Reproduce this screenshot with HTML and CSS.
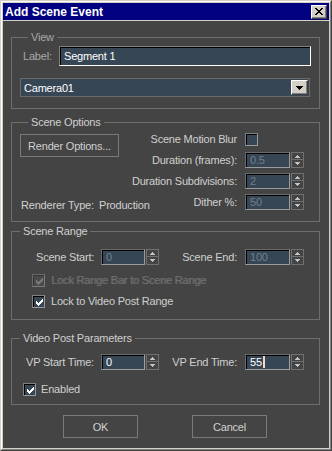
FILE: index.html
```html
<!DOCTYPE html>
<html>
<head>
<meta charset="utf-8">
<title>Add Scene Event</title>
<link rel="stylesheet" href="styles.css">
</head>
<body>
<div class="window">
  <div class="frame">
    <div class="titlebar">
      <span class="title">Add Scene Event</span>
      <span class="close-btn"><svg width="8" height="7" viewBox="0 0 8 7"><path d="M0 0h2v1h-2z M6 0h2v1h-2z M1 1h2v1h-2z M5 1h2v1h-2z M2 2h4v1h-4z M3 3h2v1h-2z M2 4h4v1h-4z M1 5h2v1h-2z M5 5h2v1h-2z M0 6h2v1h-2z M6 6h2v1h-2z" fill="#000"/></svg></span>
    </div>
    <div class="client">
      <section class="group group-view">
        <div class="legend legend-dim">View</div>
        <div class="label-row">
          <span class="label-caption">Label:</span>
          <div class="edit edit-wide">Segment 1</div>
        </div>
        <div class="combo">
          <span class="combo-text">Camera01</span>
          <span class="combo-btn"><svg width="7" height="4" viewBox="0 0 7 4"><path d="M0 0h7v1h-7z M1 1h5v1h-5z M2 2h3v1h-3z M3 3h1v1h-1z" fill="#000"/></svg></span>
        </div>
      </section>

      <section class="group group-options">
        <div class="legend">Scene Options</div>
        <div class="options-grid">
          <div class="btn btn-render">Render Options...</div>
          <span class="opt-label r1">Scene Motion Blur</span>
          <span class="opt-ctl r1"><span class="checkbox"></span></span>
          <span class="opt-label r2">Duration (frames):</span>
          <span class="opt-ctl r2"><span class="edit edit-num disabled">0.5</span><span class="spinner"><svg width="13" height="16" viewBox="0 0 13 16"><rect x="0.5" y="0.5" width="12" height="15" fill="none" stroke="#707070"/><path d="M1 7.5h11" stroke="#707070"/><path d="M6 3h1v1h-1z M5 4h3v1h-3z M4 5h5v1h-5z M4 10h5v1h-5z M5 11h3v1h-3z M6 12h1v1h-1z" fill="#c4c4c4"/></svg></span></span>
          <span class="opt-label r3">Duration Subdivisions:</span>
          <span class="opt-ctl r3"><span class="edit edit-num disabled">2</span><span class="spinner"><svg width="13" height="16" viewBox="0 0 13 16"><rect x="0.5" y="0.5" width="12" height="15" fill="none" stroke="#707070"/><path d="M1 7.5h11" stroke="#707070"/><path d="M6 3h1v1h-1z M5 4h3v1h-3z M4 5h5v1h-5z M4 10h5v1h-5z M5 11h3v1h-3z M6 12h1v1h-1z" fill="#c4c4c4"/></svg></span></span>
          <div class="renderer-type"><span class="renderer-caption">Renderer Type:</span><span>Production</span></div>
          <span class="opt-label r4">Dither %:</span>
          <span class="opt-ctl r4"><span class="edit edit-num disabled">50</span><span class="spinner"><svg width="13" height="16" viewBox="0 0 13 16"><rect x="0.5" y="0.5" width="12" height="15" fill="none" stroke="#707070"/><path d="M1 7.5h11" stroke="#707070"/><path d="M6 3h1v1h-1z M5 4h3v1h-3z M4 5h5v1h-5z M4 10h5v1h-5z M5 11h3v1h-3z M6 12h1v1h-1z" fill="#c4c4c4"/></svg></span></span>
        </div>
      </section>

      <section class="group group-range">
        <div class="legend">Scene Range</div>
        <div class="spin-row range-row">
          <span class="start-caption caption-range">Scene Start:</span>
          <span class="edit edit-short disabled">0</span>
          <span class="spinner"><svg width="13" height="16" viewBox="0 0 13 16"><rect x="0.5" y="0.5" width="12" height="15" fill="none" stroke="#707070"/><path d="M1 7.5h11" stroke="#707070"/><path d="M6 3h1v1h-1z M5 4h3v1h-3z M4 5h5v1h-5z M4 10h5v1h-5z M5 11h3v1h-3z M6 12h1v1h-1z" fill="#c4c4c4"/></svg></span>
          <span class="end-caption">Scene End:</span>
          <span class="edit edit-num disabled">100</span>
          <span class="spinner"><svg width="13" height="16" viewBox="0 0 13 16"><rect x="0.5" y="0.5" width="12" height="15" fill="none" stroke="#707070"/><path d="M1 7.5h11" stroke="#707070"/><path d="M6 3h1v1h-1z M5 4h3v1h-3z M4 5h5v1h-5z M4 10h5v1h-5z M5 11h3v1h-3z M6 12h1v1h-1z" fill="#c4c4c4"/></svg></span>
        </div>
        <div class="check-row check-lock-bar">
          <span class="checkbox checkbox-disabled"><svg width="7" height="7" viewBox="0 0 7 7"><path d="M6 0h1v1h-1z M5 1h2v1h-2z M0 2h1v1h-1z M4 2h3v1h-3z M0 3h2v1h-2z M3 3h3v1h-3z M0 4h5v1h-5z M1 5h3v1h-3z M2 6h1v1h-1z" fill="#7a7a7a"/></svg></span>
          <span class="check-text text-disabled">Lock Range Bar to Scene Range</span>
        </div>
        <div class="check-row check-lock-vp">
          <span class="checkbox"><svg width="7" height="7" viewBox="0 0 7 7"><path d="M6 0h1v1h-1z M5 1h2v1h-2z M0 2h1v1h-1z M4 2h3v1h-3z M0 3h2v1h-2z M3 3h3v1h-3z M0 4h5v1h-5z M1 5h3v1h-3z M2 6h1v1h-1z" fill="#fff"/></svg></span>
          <span class="check-text">Lock to Video Post Range</span>
        </div>
      </section>

      <section class="group group-vp">
        <div class="legend">Video Post Parameters</div>
        <div class="spin-row vp-row">
          <span class="start-caption caption-vp">VP Start Time:</span>
          <span class="edit edit-short edit-active">0</span>
          <span class="spinner"><svg width="13" height="16" viewBox="0 0 13 16"><rect x="0.5" y="0.5" width="12" height="15" fill="none" stroke="#707070"/><path d="M1 7.5h11" stroke="#707070"/><path d="M6 3h1v1h-1z M5 4h3v1h-3z M4 5h5v1h-5z M4 10h5v1h-5z M5 11h3v1h-3z M6 12h1v1h-1z" fill="#c4c4c4"/></svg></span>
          <span class="end-caption">VP End Time:</span>
          <span class="edit edit-num edit-active">55<span class="caret"></span></span>
          <span class="spinner"><svg width="13" height="16" viewBox="0 0 13 16"><rect x="0.5" y="0.5" width="12" height="15" fill="none" stroke="#707070"/><path d="M1 7.5h11" stroke="#707070"/><path d="M6 3h1v1h-1z M5 4h3v1h-3z M4 5h5v1h-5z M4 10h5v1h-5z M5 11h3v1h-3z M6 12h1v1h-1z" fill="#c4c4c4"/></svg></span>
        </div>
        <div class="check-row check-enabled">
          <span class="checkbox"><svg width="7" height="7" viewBox="0 0 7 7"><path d="M6 0h1v1h-1z M5 1h2v1h-2z M0 2h1v1h-1z M4 2h3v1h-3z M0 3h2v1h-2z M3 3h3v1h-3z M0 4h5v1h-5z M1 5h3v1h-3z M2 6h1v1h-1z" fill="#fff"/></svg></span>
          <span class="check-text check-text-enabled">Enabled</span>
        </div>
      </section>

      <div class="button-row">
        <div class="btn btn-dialog">OK</div>
        <div class="btn btn-dialog">Cancel</div>
      </div>
    </div>
  </div>
</div>
</body>
</html>
```

FILE: styles.css
```css
html, body {
  margin: 0;
  padding: 0;
  background: #444444;
}

body {
  font-family: "Liberation Sans", Arial, sans-serif;
  font-size: 11px;
  letter-spacing: -0.2px;
  color: #d0d0d0;
}

.window {
  width: 332px;
  height: 451px;
  box-sizing: border-box;
  border: 1px solid;
  border-color: #d4d0c8 #404040 #404040 #d4d0c8;
}

.frame {
  height: 100%;
  box-sizing: border-box;
  border: 1px solid;
  border-color: #ffffff #808080 #808080 #ffffff;
  background: #d4d0c8;
  padding: 1px 1px 1px 1px;
  display: flex;
  flex-direction: column;
}

.titlebar {
  height: 17px;
  flex: none;
  background: #000080;
  display: flex;
  align-items: flex-start;
  padding-left: 2px;
}

.title {
  color: #ffffff;
  font-weight: bold;
  font-size: 12px;
  letter-spacing: 0;
  line-height: 17px;
  margin-top: 1px;
}

.close-btn {
  margin-left: auto;
  margin-right: 2px;
  margin-top: 2px;
  width: 16px;
  height: 14px;
  box-sizing: border-box;
  background: #d4d0c8;
  border: 1px solid;
  border-color: #ffffff #404040 #404040 #ffffff;
  box-shadow: inset -1px -1px #808080;
  display: flex;
  align-items: center;
  justify-content: center;
  padding-bottom: 1px;
}

.close-btn svg {
  display: block;
}

.client {
  flex: 1;
  margin-top: 1px;
  background: #444444;
  padding: 16px 9px 0 8px;
}

.group {
  border: 1px solid #6e6e6e;
}

.legend {
  width: fit-content;
  margin: -7px 0 0 8px;
  padding: 0 3px;
  background: #444444;
  line-height: 13px;
  height: 13px;
  color: #d0d0d0;
}

.legend-dim {
  color: #a8a8a8;
}

/* View group */
.group-view {
  padding: 0 8px 11px 8px;
}

.label-row {
  display: flex;
  margin-top: 2px;
}

.label-caption {
  width: 36px;
  margin-left: 3px;
  line-height: 20px;
  color: #a8a8a8;
}

.edit {
  box-sizing: border-box;
  background: #364655;
  border: 1px solid;
  border-color: #6a6a6a #9a9a9a #9a9a9a #6a6a6a;
  box-shadow: inset 1px 1px #000000;
  padding-left: 4px;
  color: #ffffff;
  white-space: nowrap;
  overflow: hidden;
}

.edit-wide {
  flex: 1;
  height: 20px;
  line-height: 18px;
  border-color: #808080 #ffffff #ffffff #808080;
}

.combo {
  margin-top: 12px;
  margin-right: 1px;
  height: 19px;
  box-sizing: border-box;
  background: #364655;
  border: 1px solid #6a6a6a;
  display: flex;
  align-items: center;
}

.combo-text {
  flex: 1;
  padding-left: 3px;
  color: #ffffff;
}

.combo-btn {
  width: 17px;
  height: 15px;
  box-sizing: border-box;
  margin-right: 1px;
  background: #d4d0c8;
  border: 1px solid;
  border-color: #ffffff #404040 #404040 #ffffff;
  box-shadow: inset -1px -1px #808080;
  display: flex;
  align-items: center;
  justify-content: center;
}

.combo-btn svg {
  display: block;
}

/* Scene options */
.group-options {
  margin-top: 13px;
  padding: 0 15px 11px 8px;
}

.options-grid {
  margin-top: 2px;
  display: grid;
  grid-template-columns: 110px 115px 59px;
  grid-template-rows: 16px 16px 16px 16px;
  row-gap: 5px;
}

.btn {
  box-sizing: border-box;
  border: 1px solid #7a7a7a;
  background: #444444;
  color: #d0d0d0;
  display: flex;
  align-items: center;
  justify-content: center;
}

.btn-render {
  grid-column: 1;
  grid-row: 1 / 3;
  align-self: start;
  margin-top: 3px;
  width: 99px;
  height: 23px;
}

.opt-label {
  grid-column: 2;
  text-align: right;
  padding-right: 8px;
  line-height: 16px;
  white-space: nowrap;
}

.opt-ctl {
  grid-column: 3;
  display: flex;
  align-items: center;
  gap: 1px;
}

.r1 { grid-row: 1; }
.r2 { grid-row: 2; }
.r3 { grid-row: 3; }
.r4 { grid-row: 4; }

.edit-num {
  width: 45px;
  height: 16px;
  line-height: 14px;
  display: block;
}

.edit-short {
  width: 44px;
  height: 16px;
  line-height: 14px;
  display: block;
}

.disabled {
  color: #6f8090;
}

.spinner {
  display: block;
  width: 13px;
  height: 16px;
  margin-left: 1px;
}

.spinner svg {
  display: block;
}

.opt-ctl .spinner {
  margin-left: 0;
}

.checkbox {
  display: flex;
  align-items: center;
  justify-content: center;
  width: 13px;
  height: 13px;
  box-sizing: border-box;
  background: #364655;
  border: 1px solid;
  border-color: #808080 #9a9a9a #9a9a9a #808080;
  box-shadow: inset 1px 1px #000000;
  padding: 1px 0 0 1px;
  flex: none;
}

.checkbox svg {
  display: block;
}

.checkbox-disabled {
  background: #4a4a4a;
  border-color: #6a6a6a #7a7a7a #7a7a7a #6a6a6a;
  box-shadow: inset 1px 1px #333333;
}

.renderer-type {
  grid-column: 1 / 3;
  grid-row: 4;
  margin-left: 1px;
  padding-top: 3px;
  line-height: 16px;
  display: flex;
  white-space: nowrap;
}

.renderer-caption {
  width: 78px;
}

/* Scene range */
.group-range {
  margin-top: 9px;
  padding: 0 15px 11px 0;
}

.spin-row {
  display: flex;
  align-items: center;
  height: 16px;
}

.range-row {
  margin-top: 11px;
}

.start-caption {
  line-height: 16px;
  white-space: nowrap;
}

.caption-range {
  margin-left: 24px;
  width: 65px;
}

.caption-vp {
  margin-left: 14px;
  width: 75px;
}

.end-caption {
  width: 86px;
  box-sizing: border-box;
  text-align: right;
  padding-right: 8px;
  white-space: nowrap;
  line-height: 16px;
}

.check-row {
  display: flex;
  align-items: center;
  height: 13px;
}

.check-lock-bar {
  margin-top: 9px;
  margin-left: 20px;
}

.check-lock-vp {
  margin-top: 8px;
  margin-left: 20px;
}

.check-text {
  margin-left: 6px;
  line-height: 13px;
  white-space: nowrap;
}

.text-disabled {
  color: #6e6e6e;
  text-shadow: 1px 0 0 #5e5e5e;
}

/* Video post */
.group-vp {
  margin-top: 18px;
  padding: 0 15px 8px 0;
}

.vp-row {
  margin-top: 9px;
}

.edit-active {
  color: #ffffff;
  border-color: #6a6a6a #a0a0a0 #a0a0a0 #6a6a6a;
}

.caret {
  display: inline-block;
  width: 2px;
  height: 12px;
  margin-left: 1px;
  vertical-align: -2px;
  background: #f0d8c8;
}

.check-enabled {
  margin-top: 13px;
  margin-left: 11px;
}

.check-text-enabled {
  margin-left: 5px;
}

/* dialog buttons */
.button-row {
  display: flex;
  margin-top: 10px;
  padding-left: 52px;
  gap: 54px;
}

.btn-dialog {
  width: 75px;
  height: 23px;
}
```
